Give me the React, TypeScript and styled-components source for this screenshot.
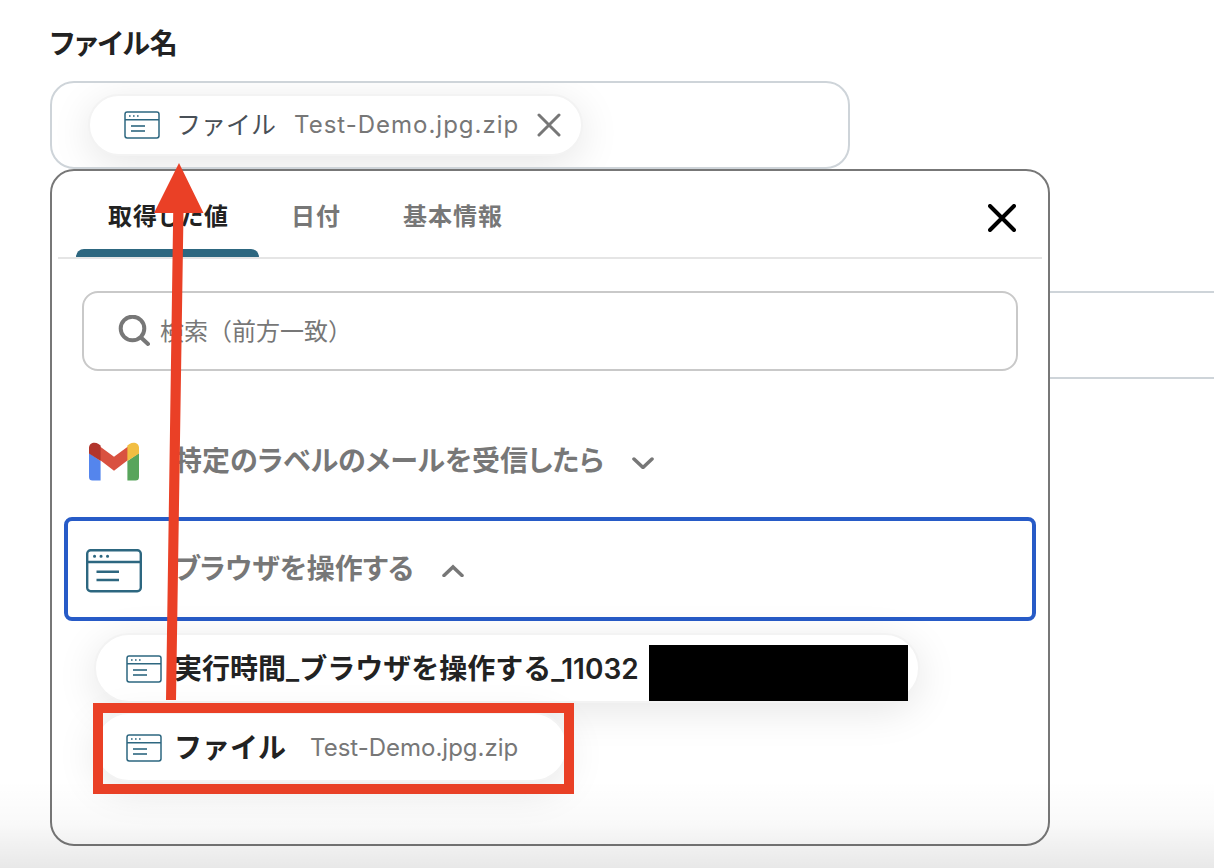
import React from "react";
import styled, { createGlobalStyle } from "styled-components";

const GlobalStyle = createGlobalStyle`
  *, *::before, *::after { box-sizing: border-box; }
  body {
    margin: 0;
    background: #fff;
    color: #222;
    font-family: Inter, "Noto Sans CJK JP", sans-serif;
    font-size: 28px;
    overflow: hidden;
  }
  button, input { font: inherit; color: inherit; }
  button { background: none; border: 0; padding: 0; cursor: pointer; }
`;

const Page = styled.main`
  position: relative;
  min-height: 100vh;
  padding: 20px 0 0 50px;
  overflow: hidden;
`;

const FieldLabel = styled.h2`
  margin: 0 0 13px;
  font-size: 28px;
  font-weight: 600;
  line-height: 48px;
  font-feature-settings: "palt";
`;

const FieldAnchor = styled.div`
  position: relative;
`;

const Field = styled.div<{ $wide?: boolean }>`
  display: flex;
  align-items: center;
  width: ${(p) => (p.$wide ? "auto" : "800px")};
  max-width: ${(p) => (p.$wide ? "none" : "100%")};
  height: 88px;
  margin-top: ${(p) => (p.$wide ? "122px" : "0")};
  margin-right: ${(p) => (p.$wide ? "-32px" : "0")};
  padding: 0 36px;
  border: 2px solid #ced4d9;
  border-radius: 24px;
  overflow: hidden;
`;

const HiddenChip = styled.div`
  width: 480px;
  height: 60px;
  margin: 206px 0 0 38px;
  border-radius: 30px;
  box-shadow: 0 8px 48px rgba(20, 60, 50, 0.12);
`;

const Chip = styled.div<{ $small?: boolean }>`
  display: flex;
  align-items: center;
  height: ${(p) => (p.$small ? "62px" : "70px")};
  padding: ${(p) => (p.$small ? "0 20px 0 34px" : "2px 10px 0 30px")};
  border: 2px solid #f3f3f3;
  border-radius: 36px;
  background: #fff;
  box-shadow: 0 8px 40px rgba(0, 0, 0, 0.1);
`;

const ChipName = styled.span<{ $small?: boolean }>`
  margin-left: ${(p) => (p.$small ? "16px" : "12px")};
  font-size: ${(p) => (p.$small ? "25px" : "28px")};
  font-weight: ${(p) => (p.$small ? 400 : 600)};
  color: ${(p) => (p.$small ? "#495057" : "#222")};
  line-height: 40px;
  white-space: nowrap;
`;

const ChipValue = styled.span<{ $small?: boolean }>`
  margin-left: ${(p) => (p.$small ? "18px" : "24px")};
  margin-right: ${(p) => (p.$small ? "18px" : "38px")};
  line-height: 32px;
  font-size: 24px;
  letter-spacing: ${(p) => (p.$small ? "1px" : "0")};
  color: #777;
  white-space: nowrap;
`;

const IconButton = styled.button`
  display: flex;
  svg { display: block; }
`;

const Redaction = styled.span`
  width: 259px;
  height: 56px;
  margin: 8px 0 0 10px;
  background: #000;
`;

const Popover = styled.section`
  position: absolute;
  top: 100%;
  left: 0;
  z-index: 1;
  width: 1000px;
  padding: 0 6px 62px;
  border: 2px solid #777;
  border-radius: 24px;
  background: #fff;
`;

const PopoverHeader = styled.header`
  display: flex;
  align-items: center;
  justify-content: space-between;
  height: 88px;
  padding: 0 26px 0 18px;
  border-bottom: 2px solid #e5e5e5;

  > button { padding-top: 8px; }
`;

const TabList = styled.div`
  display: flex;
  height: 100%;
`;

const Tab = styled.button<{ $active?: boolean }>`
  display: flex;
  flex-direction: column;
  justify-content: space-between;
  font-size: 24px;
  font-weight: 600;
  letter-spacing: 1px;
  color: ${(p) => (p.$active ? "#222" : "#777")};
  font-feature-settings: "palt";
  white-space: nowrap;

  span { padding: 28px 30px 0 32px; line-height: 36px; }
  &::after {
    content: "";
    align-self: stretch;
    height: 8px;
    border-radius: 8px 8px 0 0;
    background: ${(p) => (p.$active ? "#2d6780" : "transparent")};
  }
`;

const SearchBox = styled.label`
  display: flex;
  align-items: center;
  gap: 10px;
  height: 80px;
  margin: 32px 24px 38px;
  padding: 0 34px;
  border: 2px solid #c9c9c9;
  border-radius: 16px;

  input {
    flex: 1;
    min-width: 0;
    height: 40px;
    padding: 0;
    border: 0;
    outline: 0;
    background: none;
    font-size: 24px;
  }
  input::placeholder { color: #777; opacity: 1; }
`;

const SourceList = styled.div`
  display: flex;
  flex-direction: column;
  gap: 4px;
  padding: 0 6px;
`;

const SourceButton = styled.button<{ $focused?: boolean }>`
  display: flex;
  align-items: center;
  height: 104px;
  padding: 0 18px;
  border: 4px solid ${(p) => (p.$focused ? "#275bc7" : "transparent")};
  border-radius: 8px;
  color: #777;
  font-weight: 600;
  white-space: nowrap;
  font-feature-settings: "palt";

  span { margin: 0 28px 0 32px; line-height: 40px; }
  svg { flex: none; }
`;

const ChipList = styled.ul`
  display: flex;
  flex-direction: column;
  align-items: flex-start;
  gap: 9px;
  margin: 12px 0 0 36px;
  padding: 0;
  list-style: none;
`;

const ChipItem = styled.li`
  position: relative;
`;

const HighlightFrame = styled.div`
  position: absolute;
  inset: -9px -6px -12px -1px;
  border: 10px solid #ea4026;
  pointer-events: none;
`;

const Arrow = styled.svg`
  position: absolute;
  z-index: 2;
  left: 154px;
  top: 163px;
  pointer-events: none;
`;

const BottomShade = styled.div`
  position: absolute;
  z-index: 3;
  left: 0;
  right: 0;
  bottom: 0;
  height: 88px;
  background: linear-gradient(rgba(0, 0, 0, 0), rgba(0, 0, 0, 0.025) 50%, rgba(0, 0, 0, 0.09));
  pointer-events: none;
`;

function BrowserIcon({ large }: { large?: boolean }) {
  return large ? (
    <svg width="56" height="48" viewBox="0 -4 56 48" fill="none" stroke="#2d6780" strokeWidth="2.4">
      <rect x="1.200" y="1.200" width="53.600" height="41" rx="3.5" />
      <path d="M1 13h54M10.500 22.800h22.500M10.500 31h22.500" />
      <path d="M8.5 7.2h.1M15 7.2h.1M21.5 7.2h.1" strokeWidth="3" strokeLinecap="round" />
    </svg>
  ) : (
    <svg width="36" height="28" viewBox="0 0 36 28" fill="none" stroke="#2d6780" strokeWidth="1.5">
      <rect x="1" y="1" width="34" height="26" rx="2.2" />
      <path d="M1 8.7h34" />
      <path d="M7 15h14M7 20h14" strokeWidth="1.800" opacity="0.8" />
      <path d="M5 5h1.6M9 5h1.6M13 5h1.6" />
    </svg>
  );
}

function GmailIcon() {
  return (
    <svg width="56" height="40" viewBox="-2 -1 56 40">
      <path fill="#5485ed" d="M1 11v24A3.5 3.5 0 0 0 4.500 38.500H12.600V19z" />
      <path fill="#58a55c" d="M51 11v24A3.500 3.500 0 0 1 47.500 38.500H39.400V19z" />
      <path fill="#d95140" d="M12 4.500 26 14.700 40 4.500V18L26 28.700 12 18z" />
      <path fill="#b1352c" d="M1 11.500V6C1 1 6.500-.5 10.500 2L12.600 3.500v15.400z" />
      <path fill="#f2be42" d="M51 11.500V6C51 1 45.500-.5 41.500 2L39.400 3.500v15.400z" />
    </svg>
  );
}

function CloseIcon({ size, color, weight }: { size: number; color: string; weight: number }) {
  const end = size - 2;
  return (
    <svg width={size} height={size} fill="none" stroke={color} strokeWidth={weight} strokeLinecap="round">
      <path d={`M2 2L${end} ${end}M${end} 2L2 ${end}`} />
    </svg>
  );
}

function Chevron({ up }: { up?: boolean }) {
  return (
    <svg width="22" height="16" viewBox="0 0 22 16" fill="none" stroke="#777" strokeWidth="3.500" strokeLinecap="round">
      <path d={up ? "M2 14.500L11 6L20 14.500" : "M2 6L11 14.500L20 6"} />
    </svg>
  );
}

function SearchIcon() {
  return (
    <svg width="32" height="32" viewBox="0 0 32 32" fill="none" stroke="#777" strokeWidth="4">
      <circle cx="14.500" cy="13.500" r="11.800" />
      <path d="M23 22.500l7 6.500" strokeLinecap="round" />
    </svg>
  );
}

export default function App() {
  return (
    <Page>
      <GlobalStyle />
      <FieldLabel>ファイル名</FieldLabel>
      <FieldAnchor>
        <Field>
          <Chip $small>
            <BrowserIcon />
            <ChipName $small>ファイル</ChipName>
            <ChipValue $small>Test-Demo.jpg.zip</ChipValue>
            <IconButton type="button" aria-label="削除">
              <CloseIcon size={24} color="#777" weight={3} />
            </IconButton>
          </Chip>
        </Field>
        <Popover>
          <PopoverHeader>
            <TabList role="tablist">
              <Tab type="button" role="tab" aria-selected $active><span>取得した値</span></Tab>
              <Tab type="button" role="tab"><span>日付</span></Tab>
              <Tab type="button" role="tab"><span>基本情報</span></Tab>
            </TabList>
            <IconButton type="button" aria-label="閉じる">
              <CloseIcon size={28} color="#000" weight={4} />
            </IconButton>
          </PopoverHeader>
          <SearchBox>
            <SearchIcon />
            <input type="text" aria-label="検索" placeholder="検索（前方一致）" />
          </SearchBox>
          <SourceList>
            <SourceButton type="button" aria-expanded={false}>
              <GmailIcon />
              <span>特定のラベルのメールを受信したら</span>
              <Chevron />
            </SourceButton>
            <SourceButton type="button" aria-expanded $focused>
              <BrowserIcon large />
              <span>ブラウザを操作する</span>
              <Chevron up />
            </SourceButton>
          </SourceList>
          <ChipList>
            <ChipItem>
              <Chip>
                <BrowserIcon />
                <ChipName>実行時間_ブラウザを操作する_11032</ChipName>
                <Redaction />
              </Chip>
            </ChipItem>
            <ChipItem>
              <Chip>
                <BrowserIcon />
                <ChipName>ファイル</ChipName>
                <ChipValue>Test-Demo.jpg.zip</ChipValue>
              </Chip>
              <HighlightFrame />
            </ChipItem>
          </ChipList>
        </Popover>
      </FieldAnchor>
      <Field $wide />
      <HiddenChip />
      <Arrow width="50" height="537" viewBox="0 0 50 537" fill="#ea4026" aria-hidden="true">
        <path d="M25 0L49.500 50H29.500L22 537H12L19.200 50H0z" />
      </Arrow>
      <BottomShade />
    </Page>
  );
}
